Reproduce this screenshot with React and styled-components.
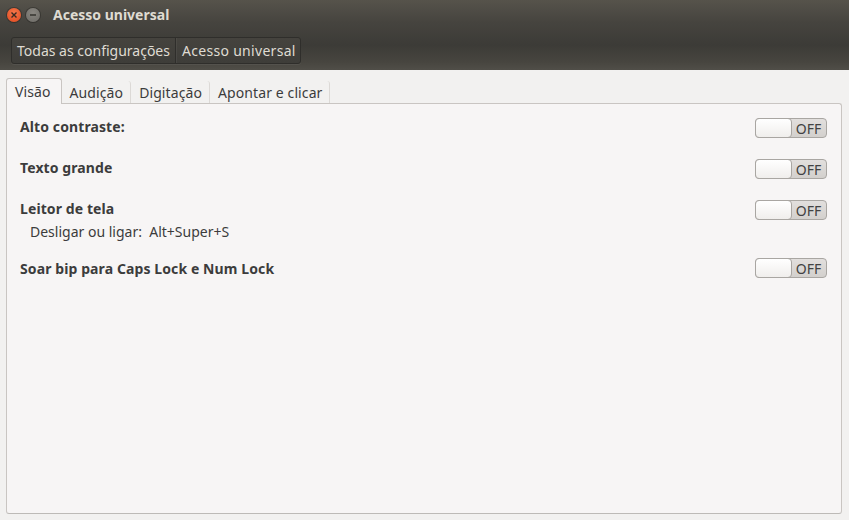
import styled, { createGlobalStyle } from "styled-components";

const Global = createGlobalStyle`
  html, body { margin: 0; padding: 0; }
  body {
    width: 849px;
    height: 520px;
    overflow: hidden;
    background: #f2f1f0;
    font-family: "Noto Sans", "Open Sans", sans-serif;
    color: #3c3c3c;
  }
`;

const Janela = styled.div`
  width: 849px;
  height: 520px;
  display: flex;
  flex-direction: column;
  background: #f2f1f0;
`;

const Cabecalho = styled.div`
  height: 70px;
  background: linear-gradient(to bottom, #56534b 0px, #46443f 22px, #3c3b37 45px, #47453f 62px, #504e48 70px);
  display: flex;
  flex-direction: column;
`;

const BarraTitulo = styled.div`
  height: 30px;
  display: flex;
  align-items: center;
  padding-left: 7px;
  gap: 5px;
`;

const BotaoJanela = styled.div`
  width: 14px;
  height: 14px;
  border-radius: 50%;
  display: flex;
  align-items: center;
  justify-content: center;
  background: ${(p) => (p.$fechar ? "radial-gradient(circle at 50% 35%, #f7774a, #e0481e)" : "radial-gradient(circle at 50% 35%, #8a8781, #6c6a65)")};
  box-shadow: 0 0 0 1px rgba(0, 0, 0, 0.25);
`;

const Titulo = styled.div`
  margin-left: 8px;
  color: #dfdbd2;
  font-weight: bold;
  font-size: 14px;
  margin-top: -1px;
`;

const BarraFerramentas = styled.div`
  flex: 1;
  display: flex;
  align-items: center;
  padding-left: 11px;
`;

const Trilha = styled.div`
  display: flex;
  height: 25px;
  border: 1px solid #2f2e2b;
  border-radius: 3px;
  background: linear-gradient(to bottom, #45433e, #3e3d39);
  box-shadow: 0 1px 0 rgba(255, 255, 255, 0.06);
`;

const Migalha = styled.div`
  display: flex;
  align-items: center;
  padding: ${(p) => (p.$primeira ? "0 5px 0 5px" : "0 4px 0 6px")};
  color: #dfdbd2;
  font-size: 14px;
  letter-spacing: ${(p) => (p.$primeira ? "0" : "0.3px")};
  border-left: ${(p) => (p.$primeira ? "none" : "1px solid #2f2e2b")};
  box-shadow: ${(p) => (p.$primeira ? "none" : "inset 1px 0 0 rgba(255,255,255,0.05)")};
`;

const Conteudo = styled.div`
  flex: 1;
  display: flex;
  flex-direction: column;
  padding: 7px 7px 6px 6px;
`;

const Abas = styled.div`
  display: flex;
  align-items: flex-end;
  height: 26px;
  position: relative;
  z-index: 1;
`;

const Aba = styled.div`
  height: ${(p) => (p.$ativa ? "26px" : "22px")};
  box-sizing: border-box;
  display: flex;
  align-items: center;
  padding: ${(p) => (p.$ativa ? "0 10px 0 8px" : "0 7px 0 8px")};
  font-size: 14px;
  letter-spacing: 0.1px;
  color: #3c3c3c;
  background: ${(p) => (p.$ativa ? "#f7f5f5" : "transparent")};
  border: ${(p) => (p.$ativa ? "1px solid #c9c5c2" : "none")};
  border-bottom: none;
  border-radius: 3px 3px 0 0;
  border-right: ${(p) => (p.$ativa ? "1px solid #c9c5c2" : "1px solid #dcd9d6")};
  margin-bottom: ${(p) => (p.$ativa ? "-1px" : "0")};
`;

const Painel = styled.div`
  flex: 1;
  background: #f7f5f5;
  border: 1px solid #c9c5c2;
  border-bottom-color: #bdbab7;
  border-radius: 0 3px 3px 3px;
  display: flex;
  flex-direction: column;
  padding: 14px 14px 0 13px;
`;

const Linha = styled.div`
  display: flex;
  justify-content: space-between;
  align-items: flex-start;
  margin-bottom: ${(p) => p.$espaco}px;
`;

const Rotulos = styled.div`
  display: flex;
  flex-direction: column;
  padding-top: ${(p) => p.$desvio}px;
`;

const Rotulo = styled.div`
  font-weight: bold;
  font-size: 14px;
  color: #3c3c3c;
  line-height: 18px;
  letter-spacing: 0.1px;
`;

const Dica = styled.div`
  font-size: 14px;
  color: #3c3c3c;
  padding-left: 10px;
  margin-top: 4px;
  line-height: 20px;
  white-space: pre;
`;

const Interruptor = styled.div`
  width: 72px;
  height: 20px;
  box-sizing: border-box;
  border: 1px solid #a9a6a2;
  border-radius: 4px;
  background: linear-gradient(to bottom, #e2dfdd, #d3d0cd);
  display: flex;
`;

const Botao = styled.div`
  width: 35px;
  height: 18px;
  margin: -1px 0 0 -1px;
  border: 1px solid #a9a6a2;
  border-radius: 4px;
  background: linear-gradient(to bottom, #ffffff, #f0eeec);
`;

const Texto = styled.div`
  flex: 1;
  display: flex;
  align-items: center;
  justify-content: center;
  font-size: 14px;
  color: #424242;
  padding-right: 1px;
`;

const Chave = () => (
  <Interruptor>
    <Botao />
    <Texto>OFF</Texto>
  </Interruptor>
);

const linhas = [
  { rotulo: "Alto contraste:", espaco: 21, desvio: 0 },
  { rotulo: "Texto grande", espaco: 21, desvio: 0 },
  { rotulo: "Leitor de tela", dica: "Desligar ou ligar:  Alt+Super+S", espaco: 16, desvio: 0 },
  { rotulo: "Soar bip para Caps Lock e Num Lock", espaco: 0, desvio: 2 },
];

const App = () => (
  <Janela>
    <Global />
    <Cabecalho>
      <BarraTitulo>
        <BotaoJanela $fechar>
          <svg width="8" height="8" viewBox="0 0 8 8">
            <path d="M1.5 1.5 L6.5 6.5 M6.5 1.5 L1.5 6.5" stroke="#3a2a22" strokeWidth="1.4" />
          </svg>
        </BotaoJanela>
        <BotaoJanela>
          <svg width="8" height="8" viewBox="0 0 8 8">
            <path d="M1 4 L7 4" stroke="#3a3934" strokeWidth="1.6" />
          </svg>
        </BotaoJanela>
        <Titulo>Acesso universal</Titulo>
      </BarraTitulo>
      <BarraFerramentas>
        <Trilha>
          <Migalha $primeira>Todas as configurações</Migalha>
          <Migalha>Acesso universal</Migalha>
        </Trilha>
      </BarraFerramentas>
    </Cabecalho>
    <Conteudo>
      <Abas>
        <Aba $ativa>Visão</Aba>
        <Aba>Audição</Aba>
        <Aba>Digitação</Aba>
        <Aba>Apontar e clicar</Aba>
      </Abas>
      <Painel>
        {linhas.map((l) => (
          <Linha key={l.rotulo} $espaco={l.espaco}>
            <Rotulos $desvio={l.desvio}>
              <Rotulo>{l.rotulo}</Rotulo>
              {l.dica && <Dica>{l.dica}</Dica>}
            </Rotulos>
            <Chave />
          </Linha>
        ))}
      </Painel>
    </Conteudo>
  </Janela>
);

export default App;
